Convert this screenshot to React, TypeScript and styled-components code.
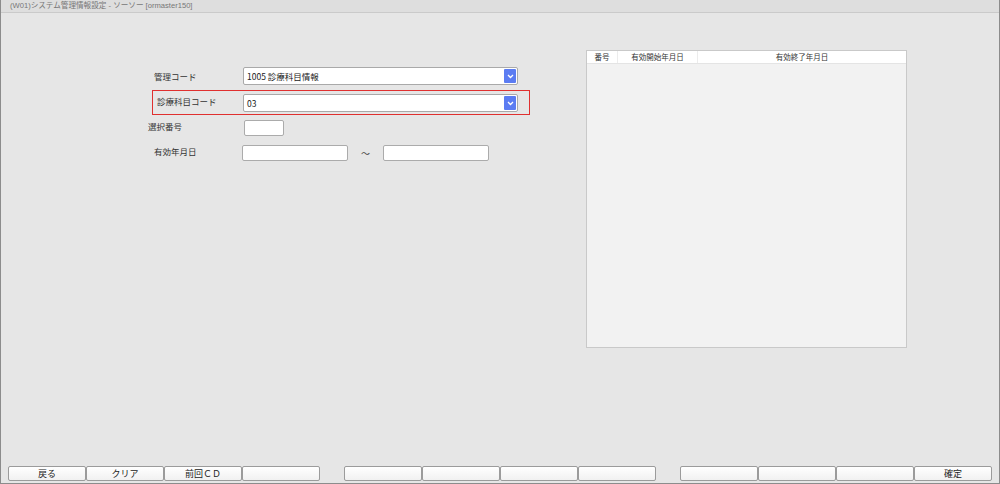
import React from "react";
import styled, { createGlobalStyle } from "styled-components";

const Global = createGlobalStyle`
  html, body { margin: 0; padding: 0; background: #e6e6e6; }
  body { font-family: "Noto Sans CJK JP", "Liberation Sans", sans-serif; }
  * { box-sizing: border-box; }
`;

const Frame = styled.div`
  width: 1000px;
  height: 484px;
  display: flex;
  flex-direction: column;
  background: #e6e6e6;
  border-left: 1px solid #8c8c8c;
  border-right: 1px solid #8c8c8c;
  border-bottom: 1px solid #8c8c8c;
  color: #222;
`;

const TitleBar = styled.div`
  height: 13px;
  flex: 0 0 13px;
  background: #dedede;
  border-bottom: 1px solid #cacaca;
  padding-left: 9px;
  font-size: 7.6px;
  line-height: 12px;
  color: #777;
  font-family: "Liberation Sans", "Noto Sans CJK JP", sans-serif;
`;

const Main = styled.div`
  flex: 1;
  display: flex;
  align-items: flex-start;
`;

const Form = styled.div`
  display: flex;
  flex-direction: column;
  margin-left: 146px;
  margin-top: 54px;
  width: 439px;
`;

const Row = styled.div<{ $mt?: number }>`
  display: flex;
  align-items: center;
  margin-top: ${(p) => p.$mt ?? 0}px;
`;

const Highlight = styled.div`
  display: flex;
  align-items: center;
  margin-top: 6px;
  margin-left: 6px;
  width: 376px;
  height: 23px;
  outline: 1.5px solid #e0302f;
  outline-offset: 0;
  padding-top: 1px;
`;

const Label = styled.div<{ $w: number; $pl: number; $dy?: number }>`
  width: ${(p) => p.$w}px;
  padding-left: ${(p) => p.$pl}px;
  font-size: 8.5px;
  color: #333;
  position: relative;
  top: ${(p) => p.$dy ?? 0}px;
  white-space: nowrap;
`;

const SelectBox = styled.div`
  width: 275px;
  height: 18px;
  background: #fff;
  border: 1px solid #a9a9a9;
  border-radius: 2px;
  display: flex;
  align-items: center;
  justify-content: space-between;
  padding-left: 3px;
  padding-right: 1px;
  font-size: 8.5px;
  color: #222;
`;

const DropBtn = styled.div`
  width: 12px;
  height: 14px;
  background: #5b7cf2;
  border-radius: 1px;
  display: flex;
  align-items: center;
  justify-content: center;
`;

const TextInput = styled.div<{ $w: number }>`
  width: ${(p) => p.$w}px;
  height: 16px;
  background: #fff;
  border: 1px solid #ababab;
  border-radius: 2px;
`;

const Tilde = styled.div`
  width: 35px;
  text-align: center;
  font-size: 9px;
  color: #444;
`;

const TablePanel = styled.div`
  margin-top: 37px;
  width: 321px;
  height: 298px;
  border: 1px solid #c9c9c9;
  background: #f2f2f2;
  display: flex;
  flex-direction: column;
`;

const HeadRow = styled.div`
  display: flex;
  height: 13px;
  background: #fff;
  border-bottom: 1px solid #e4e4e4;
`;

const HeadCell = styled.div<{ $w?: number }>`
  ${(p) => (p.$w ? `width: ${p.$w}px;` : "flex: 1;")}
  font-size: 7.5px;
  line-height: 12px;
  text-align: center;
  color: #333;
  border-right: 1px solid #ececec;
  &:last-child { border-right: none; }
`;

const Footer = styled.div`
  display: flex;
  padding-left: 7px;
  padding-bottom: 2px;
  gap: 24px;
`;

const BtnGroup = styled.div`
  display: flex;
`;

const FKey = styled.button`
  width: 78px;
  height: 15px;
  padding: 0;
  margin: 0;
  border: 1px solid #9b9b9b;
  border-radius: 2px;
  background: linear-gradient(#ffffff, #f1f1f1);
  font-family: "Noto Sans CJK JP", "Liberation Sans", sans-serif;
  font-size: 9px;
  line-height: 13px;
  color: #222;
  text-align: center;
`;

const Chevron = () => (
  <svg width="7" height="5" viewBox="0 0 7 5">
    <path d="M1 1 L3.5 3.5 L6 1" stroke="#fff" strokeWidth="1.3" fill="none" />
  </svg>
);

const groups = [
  ["戻る", "クリア", "前回ＣＤ", ""],
  ["", "", "", ""],
  ["", "", "", "確定"],
];

export default function App() {
  return (
    <>
      <Global />
      <Frame>
        <TitleBar>(W01)システム管理情報設定 - ソーソー [ormaster150]</TitleBar>
        <Main>
          <Form>
            <Row>
              <Label $w={96} $pl={7}>管理コード</Label>
              <SelectBox>
                <span>1005 診療科目情報</span>
                <DropBtn><Chevron /></DropBtn>
              </SelectBox>
            </Row>
            <Highlight>
              <Label $w={90} $pl={4} $dy={-2}>診療科目コード</Label>
              <SelectBox>
                <span>03</span>
                <DropBtn><Chevron /></DropBtn>
              </SelectBox>
            </Highlight>
            <Row $mt={6}>
              <Label $w={97} $pl={1} $dy={-2}>選択番号</Label>
              <TextInput $w={40} />
            </Row>
            <Row $mt={9}>
              <Label $w={95} $pl={7} $dy={-2}>有効年月日</Label>
              <TextInput $w={106} />
              <Tilde>～</Tilde>
              <TextInput $w={106} />
            </Row>
          </Form>
          <TablePanel>
            <HeadRow>
              <HeadCell $w={31}>番号</HeadCell>
              <HeadCell $w={80}>有効開始年月日</HeadCell>
              <HeadCell>有効終了年月日</HeadCell>
            </HeadRow>
          </TablePanel>
        </Main>
        <Footer>
          {groups.map((g, i) => (
            <BtnGroup key={i}>
              {g.map((t, j) => (
                <FKey key={j}>{t}</FKey>
              ))}
            </BtnGroup>
          ))}
        </Footer>
      </Frame>
    </>
  );
}
